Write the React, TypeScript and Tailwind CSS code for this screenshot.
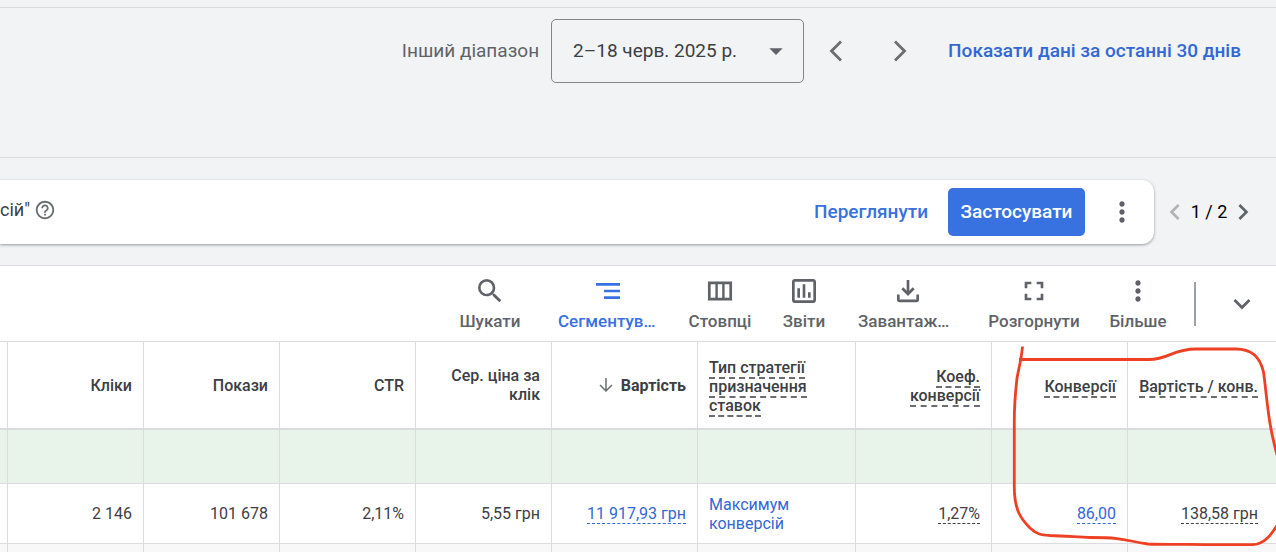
import React from "react";
import {
  MdArrowDropDown,
  MdChevronLeft,
  MdChevronRight,
  MdFullscreen,
  MdHelpOutline,
  MdMoreVert,
  MdOutlineInsertChart,
  MdSearch,
  MdSegment,
} from "react-icons/md";

function ColumnsIcon() {
  return (
    <svg viewBox="0 0 32 32" className="size-8" fill="none" stroke="currentColor" aria-hidden="true">
      <path d="M5.3 7.8h21.4v16.4h-21.4z" strokeWidth="2.7" />
      <path d="M12.6 8v16M19.4 8v16" strokeWidth="2.4" />
    </svg>
  );
}

function DownloadIcon() {
  return (
    <svg viewBox="0 0 32 32" className="size-8" fill="none" stroke="currentColor" strokeWidth="2.7" aria-hidden="true">
      <path d="M16 5v14" />
      <path d="M10.3 13.2l5.7 5.8 5.7-5.8" />
      <path d="M6.3 19.5v5q0 1.3 1.3 1.3h16.8q1.3 0 1.3-1.3v-5" />
    </svg>
  );
}

function Chevron({ d }: { d: string }) {
  return (
    <svg viewBox="0 0 24 24" className="size-6" fill="none" stroke="currentColor" strokeWidth="2.8" aria-hidden="true">
      <path d={d} />
    </svg>
  );
}

const tools = [
  { label: "Шукати", icon: <MdSearch size={32} />, width: "w-18" },
  { label: "Сегментув…", icon: <MdSegment size={32} />, width: "w-25", active: true, cut: true },
  { label: "Стовпці", icon: <ColumnsIcon />, width: "w-15" },
  { label: "Звіти", icon: <MdOutlineInsertChart size={32} />, width: "w-11" },
  { label: "Завантаж…", icon: <DownloadIcon />, width: "w-25", cut: true },
  { label: "Розгорнути", icon: <MdFullscreen size={32} />, width: "w-22" },
  { label: "Більше", icon: <MdMoreVert size={32} />, width: "w-14" },
];

function DateBar() {
  return (
    <div className="flex h-[150px] items-start justify-end border-b border-[#dadce0] pt-[11px] pr-[35px] text-[19px]">
      <div className="flex h-16 items-center">
        <label htmlFor="range" className="mr-3 text-[#5f6368]">
          Інший діапазон
        </label>
        <div className="relative">
          <select
            id="range"
            className="h-16 w-[253px] appearance-none rounded-[5px] border border-[#80868b] bg-transparent pl-[21px] text-[#3c4043]"
          >
            <option>2–18 черв. 2025 р.</option>
          </select>
          <MdArrowDropDown size={32} className="pointer-events-none absolute top-4 right-3 text-[#5f6368]" />
        </div>
        <button className="ml-5 text-[#6b6d70]" aria-label="Попередній період">
          <Chevron d="M17 2.5L7.5 12l9.5 9.5" />
        </button>
        <button className="ml-10 text-[#6b6d70]" aria-label="Наступний період">
          <Chevron d="M7 2.5l9.5 9.5L7 21.5" />
        </button>
        <a href="#" className="ml-9 font-medium text-[#3367d6]">
          Показати дані за останні 30 днів
        </a>
      </div>
    </div>
  );
}

function Recommendation() {
  return (
    <div className="flex items-center pt-[22px] pb-[21px]">
      <div className="flex h-16 flex-1 items-center rounded-r-xl bg-white shadow-[0_1px_3px_rgba(60,64,67,0.5)]">
        <div className="flex items-center pb-1">
          <span className="text-lg text-[#3c4043]">сій"</span>
          <button className="ml-1 text-[#6b6d70]" aria-label="Довідка">
            <MdHelpOutline size={22} />
          </button>
        </div>
        <div className="ml-auto flex items-center text-[19px] font-medium">
          <button className="text-[#3871e0]">Переглянути</button>
          <button className="ml-5 h-12 w-[137px] rounded-[5px] bg-[#3871e0] text-white">Застосувати</button>
          <button className="mr-4 ml-[21px] text-[#5f6368]" aria-label="Інші дії">
            <MdMoreVert size={32} />
          </button>
        </div>
      </div>
      <div className="flex w-[122px] items-center justify-center pr-3 text-lg text-black">
        <button className="text-[#b0b2b5]" aria-label="Назад">
          <MdChevronLeft size={32} />
        </button>
        <span>1 / 2</span>
        <button className="text-[#5f6368]" aria-label="Далі">
          <MdChevronRight size={32} />
        </button>
      </div>
    </div>
  );
}

function Toolbar() {
  return (
    <div className="flex h-[75px] justify-end gap-7 pr-[22px]">
      <div className="flex items-start gap-8 pt-[9px]">
        {tools.map((tool) => (
          <button
            key={tool.label}
            className={`flex shrink-0 flex-col items-center gap-1 ${tool.width} ${
              tool.active ? "text-[#3871e0]" : "text-[#5f6368]"
            }`}
          >
            {tool.icon}
            <span
              className={`text-[17px] leading-5 font-medium whitespace-nowrap ${tool.cut ? "self-start" : ""}`}
            >
              {tool.label}
            </span>
          </button>
        ))}
      </div>
      <div className="flex items-center gap-[34px]">
        <div className="h-11 w-[2px] bg-[#9aa0a6]" />
        <button className="text-[#5f6368]" aria-label="Згорнути">
          <Chevron d="M4.5 8l7.5 7.500L19.500 8" />
        </button>
      </div>
    </div>
  );
}

const cell = "border-r border-[#dadce0] px-[11px] last:border-r-0 last:pr-[18px]";
const hintCell = `${cell} pt-[2px]`;
const dashed = "border-b-2 border-dashed border-[#6b6d70]";
const dashedThin = "border-b border-dashed";

function StatsTable() {
  return (
    <table className="w-full table-fixed border-separate border-spacing-0 border-t border-[#dadce0] text-right text-base leading-[19px] text-[#3c4043]">
      <colgroup>
        <col className="w-2" />
        <col className="w-34" />
        <col className="w-34" />
        <col className="w-34" />
        <col className="w-34" />
        <col className="w-[146px]" />
        <col className="w-[158px]" />
        <col className="w-34" />
        <col className="w-34" />
        <col />
      </colgroup>
      <thead>
        <tr className="h-[88px] [&>th]:border-b-2 [&>th]:font-medium">
          <th className="border-r border-[#dadce0]" />
          <th className={cell}>Кліки</th>
          <th className={cell}>Покази</th>
          <th className={cell}>CTR</th>
          <th className={cell}>Сер. ціна за клік</th>
          <th className={cell}>
            <span className="flex items-center justify-end gap-2 font-bold">
              <svg viewBox="0 0 14 16" className="h-4 w-[14px]" fill="none" stroke="#6b6d70" strokeWidth="1.5" aria-hidden="true">
                <path d="M7 1v13M1 8l6 6 6-6" />
              </svg>
              Вартість
            </span>
          </th>
          <th className={`${hintCell} text-left`}>
            <span className={dashed}>Тип стратегії призначення ставок</span>
          </th>
          <th className={hintCell}>
            <span className={dashed}>Коеф. конверсії</span>
          </th>
          <th className={hintCell}>
            <span className={dashed}>Конверсії</span>
          </th>
          <th className={`${hintCell} whitespace-nowrap`}>
            <span className={dashed}>Вартість / конв.</span>
          </th>
        </tr>
      </thead>
      <tbody>
        <tr className="h-[54px] bg-[#e8f3ea] [&>td]:border-b">
          {Array.from({ length: 10 }, (_, i) => (
            <td key={i} className="border-r border-[#dadce0] last:border-r-0" />
          ))}
        </tr>
        <tr className="h-[60px] bg-white [&>td]:border-b">
          <td className="border-r border-[#dadce0]" />
          <td className={cell}>2 146</td>
          <td className={cell}>101 678</td>
          <td className={cell}>2,11%</td>
          <td className={cell}>5,55 грн</td>
          <td className={cell}>
            <span className={`${dashedThin} border-current text-[#3367d6]`}>11 917,93 грн</span>
          </td>
          <td className={`${cell} text-left`}>
            <a href="#" className="text-[#3367d6]">
              Максимум конверсій
            </a>
          </td>
          <td className={cell}>
            <span className={dashedThin}>1,27%</span>
          </td>
          <td className={cell}>
            <span className={`${dashedThin} border-current text-[#3367d6]`}>86,00</span>
          </td>
          <td className={cell}>
            <span className={dashedThin}>138,58 грн</span>
          </td>
        </tr>
        <tr className="h-2 bg-[#f8f8f8]">
          {Array.from({ length: 10 }, (_, i) => (
            <td key={i} className="border-r border-[#dadce0] last:border-r-0" />
          ))}
        </tr>
      </tbody>
    </table>
  );
}

// Hand-drawn marker around the two conversion columns
function Marker() {
  return (
    <svg
      viewBox="1008 342 268 210"
      className="pointer-events-none absolute right-0 bottom-0 h-[210px] w-[268px]"
      fill="none"
      stroke="#ee4023"
      strokeWidth="2.8"
      aria-hidden="true"
    >
      <path d="M1022.5 346.5C1022 355 1019 368 1017 378C1015 396 1014.3 405 1014.3 420V487C1014.3 510 1021 519 1030 528C1037 534.5 1041 535 1050 535.5C1068 536 1080 537.5 1090 537.5C1128 537.5 1125 541 1148 544C1170 545 1190 543.7 1210 544.7H1252C1264 545 1271 535 1278 524" />
      <path d="M1019 359.5H1149C1169 359.5 1172 349 1196 349H1236C1252 349 1260 357 1263.5 372C1266 389 1267 408 1271 429C1273 440 1275 447 1277 455" />
    </svg>
  );
}

export default function App() {
  return (
    <div className="relative overflow-hidden bg-[#f1f3f4] font-['Roboto',sans-serif]">
      <div className="h-2 border-b border-[#dadce0]" />
      <DateBar />
      <Recommendation />
      <div className="border-t border-[#dadce0] bg-white">
        <Toolbar />
        <StatsTable />
      </div>
      <Marker />
    </div>
  );
}
